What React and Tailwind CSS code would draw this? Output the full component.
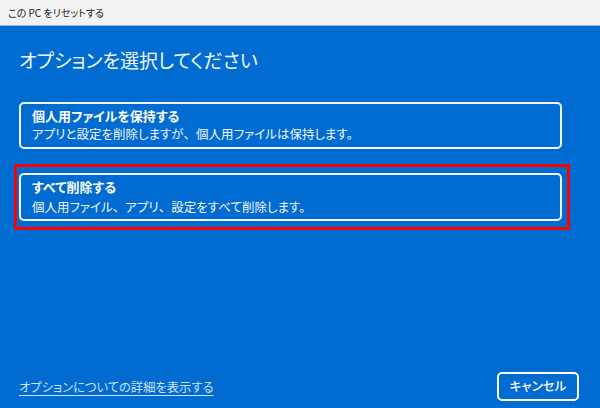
const jp = "font-['Noto_Sans_CJK_JP','Noto_Sans',sans-serif] [font-feature-settings:'palt']";

// keeps the ideographic comma full width, like the original dialog
const C = () => <span className="[font-feature-settings:normal]">、</span>;

const OptionCard = ({ title, desc, className = "", descClass = "" }) => {
  return (
    <div
      className={`w-[543px] border-2 border-[#f2f6fc] rounded-[5px] pl-[11px] text-white ${className}`}
    >
      <div className="text-[13px] font-bold leading-[18px]">{title}</div>
      <div className={`text-[12.5px] leading-[18px] text-[#f4f8fd] ${descClass}`}>{desc}</div>
    </div>
  );
};

const App = () => {
  return (
    <div className={`w-[600px] h-[408px] flex flex-col bg-[#006bd0] overflow-hidden ${jp}`}>
      <div className="h-[26px] shrink-0 bg-[#f3f3f3] border-b border-[#a9b3c6] flex items-center pl-[8px]">
        <span className="text-[10px] text-[#222] leading-none">この PC をリセットする</span>
      </div>

      <div className="flex-1 flex flex-col pt-[21px]">
        <h1 className="pl-[19px] text-[19px] leading-[26px] font-normal text-[#f4f8fd]">
          オプションを選択してください
        </h1>

        <OptionCard
          className="ml-[19px] mt-[29px] h-[47px] pt-[3px]"
          title="個人用ファイルを保持する"
          desc={<>アプリと設定を削除しますが<C />個人用ファイルは保持します。</>}
        />

        <div className="ml-[14px] mt-[15px] w-[556px] border-[3px] border-[#ff0000] pl-[2px] pr-[5px] py-[6px]">
          <OptionCard
            className="h-[48px] pt-[3px]"
            descClass="mt-[2px]"
            title="すべて削除する"
            desc={<>個人用ファイル<C />アプリ<C />設定をすべて削除します。</>}
          />
        </div>

        <div className="mt-auto flex items-center justify-between pl-[19px] pr-[21px] pb-[7px]">
          <a className="text-[12.3px] leading-[18px] text-[#cfe2f7] underline underline-offset-[3px] cursor-pointer">
            オプションについての詳細を表示する
          </a>
          <button className="w-[82px] h-[29px] border-2 border-white rounded-[5px] text-[12.5px] font-medium text-white">
            キャンセル
          </button>
        </div>
      </div>
    </div>
  );
};

export default App;
